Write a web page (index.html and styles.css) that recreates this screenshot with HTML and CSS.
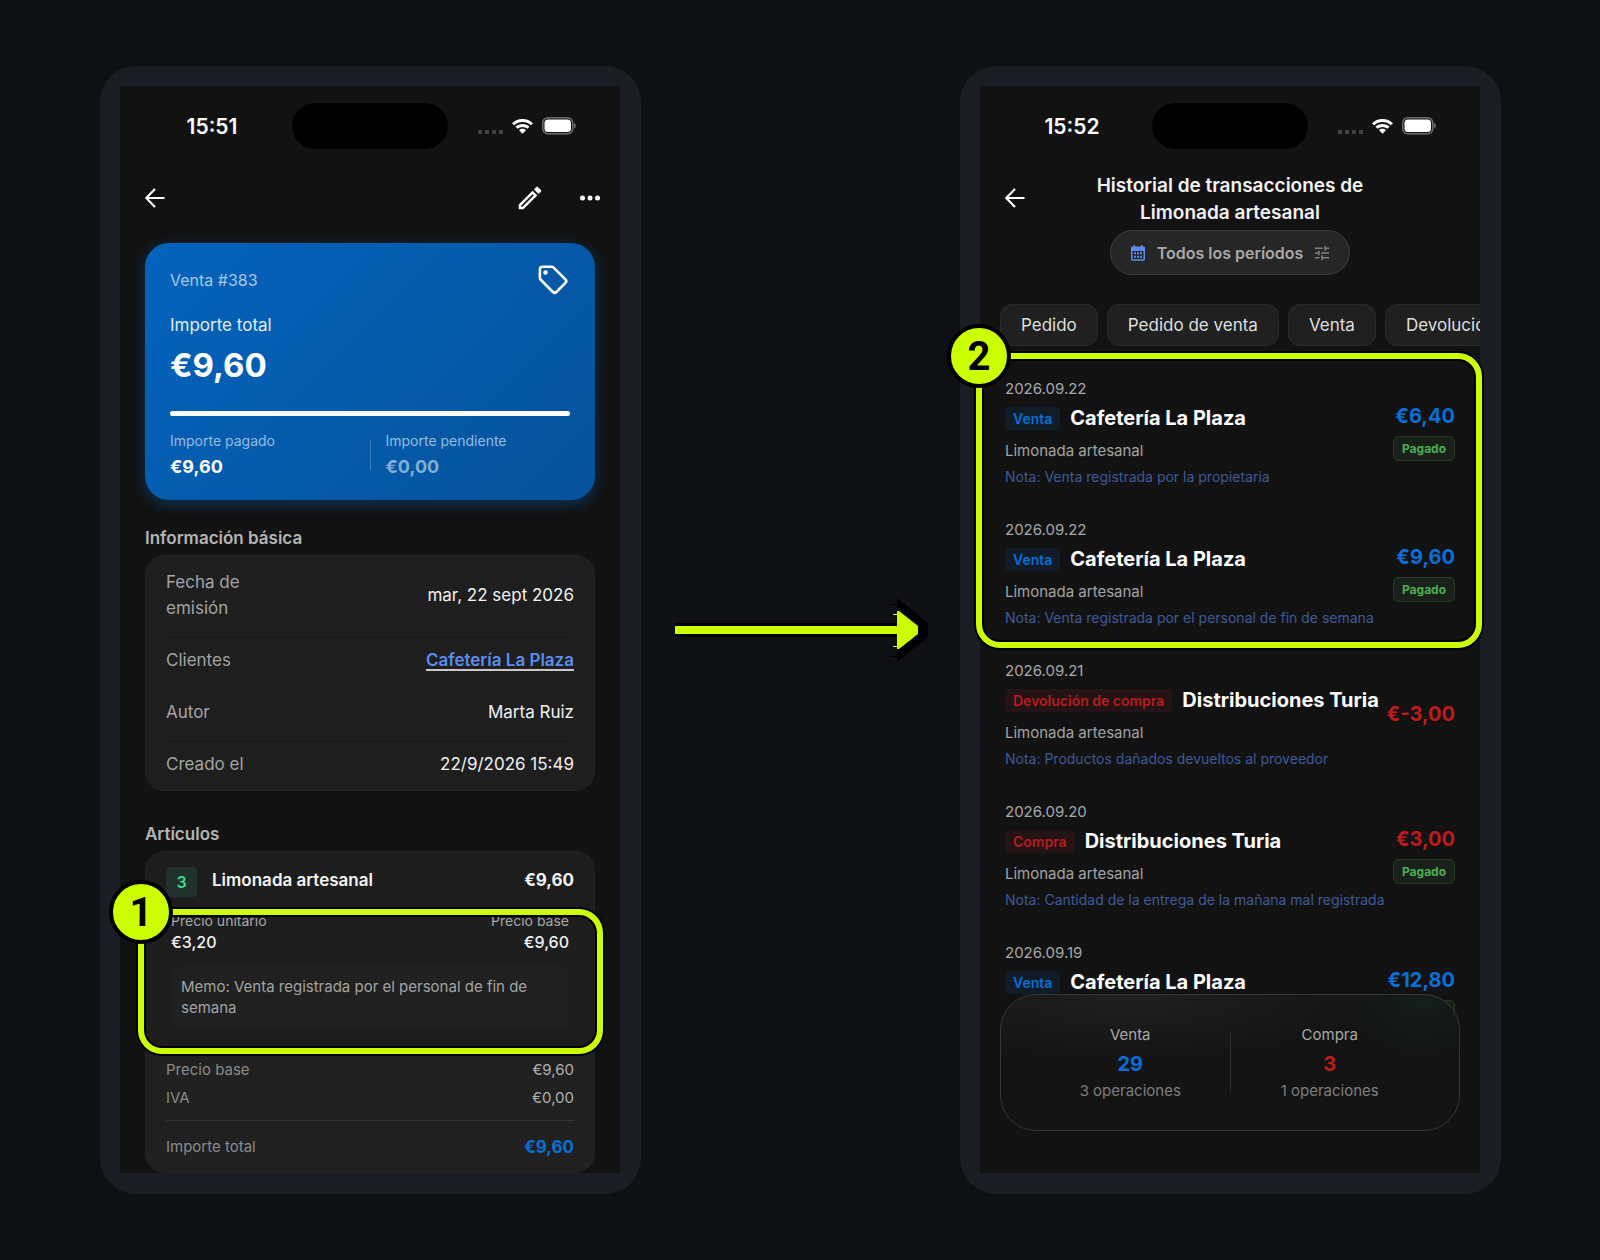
FILE: index.html
```
<!DOCTYPE html>
<html lang="es">
<head>
<meta charset="utf-8">
<meta name="viewport" content="width=device-width, initial-scale=1">
<title>Historial de transacciones</title>
<link rel="stylesheet" href="styles.css">
</head>
<body>
<svg class="defs" aria-hidden="true">
  <symbol id="i-wifi" viewBox="0 0 21 15">
    <path d="M10.500 0C6.400 0 2.700 1.600 0 4.200L2.100 6.300C4.300 4.200 7.300 3 10.500 3S16.700 4.200 18.900 6.300L21 4.200C18.300 1.600 14.600 0 10.500 0Z"/>
    <path d="M10.500 5C7.800 5 5.300 6 3.500 7.700L5.600 9.800C6.900 8.600 8.600 7.900 10.500 7.900S14.100 8.600 15.400 9.800L17.500 7.700C15.700 6 13.200 5 10.500 5Z"/>
    <path d="M10.500 9.800C9.200 9.800 8 10.300 7.100 11.200L10.500 14.800L13.900 11.200C13 10.300 11.800 9.800 10.500 9.800Z"/>
  </symbol>
  <symbol id="i-battery" viewBox="0 0 34 18">
    <rect x="0.750" y="0.750" width="30" height="16" rx="5" fill="none" stroke="#6d6d6d" stroke-width="1.500"/>
    <rect x="2.500" y="2.500" width="26.500" height="12.500" rx="3.500"/>
    <path d="M32 6C33.200 6.500 33.800 7.500 33.800 8.800S33.200 11.100 32 11.600Z" fill="#6d6d6d"/>
  </symbol>
  <symbol id="i-back" viewBox="0 0 20 20">
    <path d="M19.500 10H1.500M10 1L1.200 10L10 19" fill="none" stroke="currentColor" stroke-width="2.200"/>
  </symbol>
</svg>
<main class="stage">

  <section class="phone">
    <div class="screen">
      <div class="status">
        <span class="status-time">15:51</span>
        <span class="island"></span>
        <span class="status-icons">
          <span class="signal"><i></i><i></i><i></i><i></i></span>
          <svg class="wifi"><use href="#i-wifi"/></svg>
          <svg class="battery"><use href="#i-battery"/></svg>
        </span>
      </div>
      <header class="appbar">
        <button class="icon-btn" aria-label="Volver"><svg class="back"><use href="#i-back"/></svg></button>
        <div class="appbar-actions">
          <button class="icon-btn" aria-label="Editar"><svg class="edit" viewBox="0 0 24 24"><path d="M14.060 9.020l.920.920L5.920 19H5v-.920l9.060-9.060M17.660 3c-.250 0-.510.100-.700.290l-1.830 1.830 3.750 3.750 1.830-1.830c.390-.390.390-1.020 0-1.410l-2.340-2.340c-.200-.200-.450-.290-.710-.290zm-3.600 3.190L3 17.250V21h3.750L17.810 9.940l-3.750-3.750z"/></svg></button>
          <button class="icon-btn" aria-label="Más opciones"><svg class="more" viewBox="0 0 20 6"><circle cx="2.500" cy="3" r="2.500"/><circle cx="10" cy="3" r="2.500"/><circle cx="17.500" cy="3" r="2.500"/></svg></button>
        </div>
      </header>

      <div class="content">
        <article class="sale">
          <div class="sale-head">
            <span>Venta #383</span>
            <svg class="tag" viewBox="0 0 30 30"><path d="M4.500 1.700H13.500C14.300 1.700 14.900 1.900 15.400 2.400L27.400 14.400C28.500 15.500 28.500 16.800 27.400 17.900L18.400 27C17.300 28.100 16 28.100 14.900 27L2.700 14.800C2.100 14.300 1.900 13.700 1.900 12.900V4.300C1.900 2.700 2.900 1.700 4.500 1.700Z" fill="none" stroke="currentColor" stroke-width="2.600"/><circle cx="7.500" cy="7.500" r="2.200"/></svg>
          </div>
          <div class="sale-label">Importe total</div>
          <div class="sale-amount">€9,60</div>
          <div class="sale-progress"></div>
          <div class="sale-split">
            <div><div class="split-label">Importe pagado</div><div class="split-value">€9,60</div></div>
            <div class="split-line"></div>
            <div class="pending"><div class="split-label">Importe pendiente</div><div class="split-value">€0,00</div></div>
          </div>
        </article>

        <h2 class="heading">Información básica</h2>
        <dl class="info">
          <div class="info-row"><dt>Fecha de emisión</dt><dd>mar, 22 sept 2026</dd></div>
          <div class="info-row"><dt>Clientes</dt><dd><a href="#cliente">Cafetería La Plaza</a></dd></div>
          <div class="info-row"><dt>Autor</dt><dd>Marta Ruiz</dd></div>
          <div class="info-row"><dt>Creado el</dt><dd>22/9/2026 15:49</dd></div>
        </dl>

        <h2 class="heading">Artículos</h2>
        <div class="items">
          <div class="item-box">
            <div class="item-head">
              <span class="qty">3</span>
              <span class="item-name">Limonada artesanal</span>
              <span class="item-price">€9,60</span>
            </div>
            <div class="item-detail">
              <div class="price-line price-labels"><span>Precio unitario</span><span>Precio base</span></div>
              <div class="price-line price-values"><span>€3,20</span><span>€9,60</span></div>
              <p class="memo">Memo: Venta registrada por el personal de fin de semana</p>
            </div>
          </div>
          <div class="totals">
            <div class="total-row"><span>Precio base</span><span class="total-value">€9,60</span></div>
            <div class="total-row"><span>IVA</span><span class="total-value">€0,00</span></div>
            <div class="total-row grand"><span>Importe total</span><span class="grand-value">€9,60</span></div>
          </div>
        </div>
      </div>
    </div>
    <div class="mark mark-memo"><span class="mark-num">1</span></div>
  </section>

  <svg class="arrow" viewBox="0 0 256 66" aria-hidden="true">
    <path d="M0 25H222V0L253 25V39L222 64V39H0Z" fill="#000"/>
    <path d="M215 6h7v1h-7zM215 58h7v1h-7z" fill="#000"/>
    <path d="M0 28H222V13H224L243 28V36L224 51H222V36H0Z" fill="#cf0"/>
    <path d="M218 16h4v1h-4zM218 48h4v1h-4z" fill="#cf0"/>
  </svg>

  <section class="phone">
    <div class="screen">
      <div class="status">
        <span class="status-time">15:52</span>
        <span class="island"></span>
        <span class="status-icons">
          <span class="signal"><i></i><i></i><i></i><i></i></span>
          <svg class="wifi"><use href="#i-wifi"/></svg>
          <svg class="battery"><use href="#i-battery"/></svg>
        </span>
      </div>
      <header class="history-bar">
        <button class="icon-btn" aria-label="Volver"><svg class="back"><use href="#i-back"/></svg></button>
        <div class="history-title">
          <h1>Historial de transacciones de Limonada artesanal</h1>
          <button class="period">
            <svg class="calendar" viewBox="0 0 14 16"><path fill-rule="evenodd" d="M2.500 0H4V1.500H10V0H11.500V1.500H12.400C13.300 1.500 14 2.200 14 3.100V14C14 15 13.300 15.700 12.400 15.700H1.600C.7 15.700 0 15 0 14V3.100C0 2.200.7 1.500 1.600 1.500H2.500ZM1.500 6V14.200H12.500V6Z"/><path d="M3 7.200h2v2H3zM6 7.200h2v2H6zM9 7.200h2v2H9zM3 10.700h2v2H3zM6 10.700h2v2H6zM9 10.700h2v2H9z"/></svg>
            <span>Todos los períodos</span>
            <svg class="tune" viewBox="3 3 18 18"><path d="M3 17v2h6v-2H3zM3 5v2h10V5H3zm10 16v-2h8v-2h-8v-2h-2v6h2zM7 9v2H3v2h4v2h2V9H7zm14 4v-2H11v2h10zm-6-4h2V7h4V5h-4V3h-2v6z"/></svg>
          </button>
        </div>
      </header>

      <nav class="chips">
        <button>Pedido</button><button>Pedido de venta</button><button>Venta</button><button>Devolución</button>
      </nav>

      <ul class="history">
        <li class="entry">
          <div>
            <div class="entry-date">2026.09.22</div>
            <div class="entry-main"><span class="kind">Venta</span><strong>Cafetería La Plaza</strong></div>
            <div class="entry-item">Limonada artesanal</div>
            <div class="entry-note">Nota: Venta registrada por la propietaria</div>
          </div>
          <div class="entry-side"><span class="amount">€6,40</span><span class="paid">Pagado</span></div>
        </li>
        <li class="entry">
          <div>
            <div class="entry-date">2026.09.22</div>
            <div class="entry-main"><span class="kind">Venta</span><strong>Cafetería La Plaza</strong></div>
            <div class="entry-item">Limonada artesanal</div>
            <div class="entry-note">Nota: Venta registrada por el personal de fin de semana</div>
          </div>
          <div class="entry-side"><span class="amount">€9,60</span><span class="paid">Pagado</span></div>
        </li>
        <li class="entry purchase">
          <div>
            <div class="entry-date">2026.09.21</div>
            <div class="entry-main"><span class="kind">Devolución de compra</span><strong>Distribuciones Turia</strong></div>
            <div class="entry-item">Limonada artesanal</div>
            <div class="entry-note">Nota: Productos dañados devueltos al proveedor</div>
          </div>
          <div class="entry-side"><span class="amount">€-3,00</span></div>
        </li>
        <li class="entry purchase">
          <div>
            <div class="entry-date">2026.09.20</div>
            <div class="entry-main"><span class="kind">Compra</span><strong>Distribuciones Turia</strong></div>
            <div class="entry-item">Limonada artesanal</div>
            <div class="entry-note">Nota: Cantidad de la entrega de la mañana mal registrada</div>
          </div>
          <div class="entry-side"><span class="amount">€3,00</span><span class="paid">Pagado</span></div>
        </li>
        <li class="entry">
          <div>
            <div class="entry-date">2026.09.19</div>
            <div class="entry-main"><span class="kind">Venta</span><strong>Cafetería La Plaza</strong></div>
          </div>
          <div class="entry-side"><span class="amount">€12,80</span><span class="paid"></span></div>
        </li>
      </ul>

      <footer class="summary">
        <div class="sum-col"><span>Venta</span><strong class="sum-sale">29</strong><small>3 operaciones</small></div>
        <div class="sum-line"></div>
        <div class="sum-col"><span>Compra</span><strong class="sum-buy">3</strong><small>1 operaciones</small></div>
      </footer>
    </div>
    <div class="mark mark-sales"><span class="mark-num">2</span></div>
  </section>

</main>
</body>
</html>
```
FILE: styles.css
```
* { box-sizing: border-box; }

body {
  margin: 0;
  background: #0f1014;
  color: #f2f2f2;
  font-family: Inter, "Liberation Sans", sans-serif;
}

button {
  font: inherit;
  color: inherit;
  border: 0;
  background: none;
  padding: 0;
}

svg { display: block; fill: currentColor; }
h1, h2, p, dl, dd, ul { margin: 0; padding: 0; }
.defs { position: absolute; width: 0; height: 0; }

.stage {
  display: grid;
  grid-template-columns: minmax(0, 541fr) minmax(0, 319fr) minmax(0, 541fr);
  min-height: 100vh;
  padding: 66px 99px 66px 100px;
}

.phone {
  position: relative;
  display: flex;
  padding: 20px 21px 21px 20px;
  border-radius: 36px;
  background: #1b1d25;
}

.screen {
  position: relative;
  flex: 1;
  min-width: 0;
  overflow: hidden;
  background: #121212;
}

/* Status bar */
.status {
  display: grid;
  grid-template-columns: 1fr 156px 1fr;
  align-items: center;
  height: 80px;
}
.status-time {
  padding-left: 12px;
  text-align: center;
  font-size: 21px;
  font-weight: 600;
  color: #fff;
}
.island { height: 46px; border-radius: 23px; background: #000; }
.status-icons {
  display: flex;
  align-items: center;
  justify-content: flex-end;
  gap: 9px;
  padding-right: 44px;
  color: #fff;
}
.signal { display: flex; gap: 3px; padding-top: 12px; }
.signal i { width: 4px; height: 4px; border-radius: 1px; background: #444; }
.wifi { width: 21px; height: 15px; }
.battery { width: 34px; height: 18px; }

/* App bars */
.appbar {
  display: flex;
  align-items: center;
  justify-content: space-between;
  height: 64px;
  padding: 0 20px 0 25px;
}
.appbar-actions { display: flex; align-items: center; gap: 35px; }
.icon-btn { color: #fff; }
.back { width: 20px; height: 20px; }
.edit { width: 30px; height: 30px; }
.more { width: 20px; height: 6px; }

.content { padding: 13px 25px 0; }

/* Sale card */
.sale {
  padding: 22px 25px 21px;
  margin-bottom: 26px;
  border-radius: 24px;
  background: linear-gradient(135deg, #0463bd, #05529a);
  box-shadow: 0 4px 14px rgba(4, 99, 189, 0.4);
}
.sale-head {
  display: flex;
  align-items: center;
  justify-content: space-between;
  height: 30px;
  padding-right: 2px;
  font-size: 16px;
  color: #a6c8e8;
}
.tag { width: 30px; height: 30px; color: #fff; }
.sale-label { margin-top: 17px; font-size: 17px; line-height: 26px; color: #e3eef8; }
.sale-amount { margin-top: 6px; font-size: 33px; font-weight: 700; line-height: 42px; color: #fff; }
.sale-progress { height: 5px; margin: 25px 0 15px; border-radius: 3px; background: #fff; }
.sale-split { display: grid; grid-template-columns: 1fr 1px 1fr; align-items: center; }
.split-label { margin-bottom: 4px; font-size: 14px; line-height: 20px; color: #93bbe0; }
.split-value { font-size: 18px; font-weight: 700; line-height: 24px; color: #fff; }
.split-line { height: 30px; background: #3b81c2; }
.pending { padding-left: 15px; }
.pending .split-value { color: #82aed6; }

.heading { margin-bottom: 5px; font-size: 17px; font-weight: 600; line-height: 24px; color: #b4b4b4; }

/* Basic information */
.info {
  margin-bottom: 31px;
  padding: 0 20px;
  border: 1px solid #232323;
  border-radius: 20px;
  background: #1e1e1e;
  font-size: 17px;
  line-height: 26px;
}
.info-row {
  display: flex;
  align-items: center;
  justify-content: space-between;
  padding: 12px 0 13px;
  border-bottom: 1px solid #232323;
}
.info-row:first-child { padding-top: 13px; }
.info-row:last-child { border-bottom: 0; }
.info dt { max-width: 120px; color: #a3a3a3; }
.info a {
  font-weight: 600;
  color: #5b8def;
  text-decoration: underline 2px #c8c8c8;
  text-underline-offset: 3px;
}

/* Items */
.items {
  overflow: hidden;
  border: 1px solid #232323;
  border-radius: 20px;
  background: #202020;
}
.item-box { padding: 15px 0 20px; background: #1d1d1d; }
.item-head {
  display: flex;
  padding: 0 20px;
  font-size: 17px;
  font-weight: 600;
  line-height: 26px;
  color: #f5f5f5;
}
.qty {
  width: 31px;
  height: 30px;
  border-radius: 4px;
  background: #20302a;
  text-align: center;
  font-size: 16px;
  line-height: 30px;
  color: #3ddc84;
}
.item-name { flex: 1; padding-left: 15px; }
.item-price { font-weight: 700; }
.item-detail { padding: 15px 25px 0; }
.price-line { display: flex; justify-content: space-between; }
.price-labels { font-size: 14px; line-height: 18px; color: #a8a8a8; }
.price-values { margin-bottom: 12px; font-size: 16px; font-weight: 500; line-height: 24px; }
.memo {
  padding: 10px;
  border-radius: 10px;
  background: #202020;
  font-size: 15px;
  line-height: 21px;
  color: #a3a3a3;
}
.totals { padding: 8px 20px 11px; font-size: 15px; line-height: 28px; color: #8a8a8a; }
.total-row { display: flex; justify-content: space-between; }
.total-value { color: #b0b0b0; }
.grand { margin-top: 8px; padding-top: 12px; border-top: 1px solid #353535; }
.grand-value { font-size: 17px; font-weight: 700; color: #0570d8; }

/* History */
.history-bar {
  display: grid;
  grid-template-columns: 20px minmax(0, 1fr) 20px;
  padding: 6px 25px 0;
}
.history-bar .icon-btn { height: 52px; }
.history-title { display: flex; flex-direction: column; align-items: center; gap: 4px; }
.history-title h1 {
  max-width: 320px;
  text-align: center;
  font-size: 19px;
  font-weight: 600;
  line-height: 27px;
}
.period {
  display: flex;
  align-items: center;
  gap: 12px;
  height: 45px;
  padding: 0 20px;
  border: 1px solid #3c3c3c;
  border-radius: 23px;
  background: #262626;
  font-size: 16px;
  font-weight: 600;
  color: #a8a8a8;
}
.calendar { width: 14px; height: 16px; color: #5b8def; }
.tune { width: 14px; height: 14px; color: #828282; }

.chips { display: flex; gap: 9px; overflow: hidden; padding: 29px 0 0 20px; }
.chips button {
  flex: none;
  height: 42px;
  padding: 0 20px;
  border: 1px solid #2a2a2a;
  border-radius: 12px;
  background: #202020;
  font-size: 17px;
  color: #dedede;
}

.history { padding: 31px 25px 0; list-style: none; }
.entry {
  display: grid;
  grid-template-columns: minmax(0, 1fr) auto;
  align-items: center;
  min-height: 110px;
  margin-bottom: 31px;
  white-space: nowrap;
}
.entry > div:first-child { align-self: start; }
.entry-date { font-size: 15px; line-height: 24px; color: #a8a8a8; }
.entry-main { display: flex; align-items: center; gap: 10px; height: 34px; }
.entry-main strong { font-size: 20px; font-weight: 700; color: #fff; }
.kind {
  padding: 0 8px;
  border-radius: 4px;
  background: #101c28;
  font-size: 14px;
  font-weight: 600;
  line-height: 23px;
  color: #0570d8;
}
.entry-item { font-size: 15px; line-height: 32px; color: #a3a3a3; }
.entry-note { font-size: 14px; line-height: 20px; color: #3d5a96; }
.entry-side { display: flex; flex-direction: column; align-items: flex-end; gap: 6px; }
.amount { font-size: 20px; font-weight: 700; line-height: 27px; color: #0570d8; }
.paid {
  min-width: 62px;
  height: 25px;
  border: 1px solid #1f3a20;
  border-radius: 5px;
  background: #182019;
  text-align: center;
  font-size: 12px;
  font-weight: 700;
  line-height: 23px;
  color: #4caf50;
}
.purchase .kind { background: #241314; color: #b71c1c; }
.purchase .amount { color: #c01a1a; }

.summary {
  position: absolute;
  inset: auto 20px 42px;
  display: grid;
  grid-template-columns: 1fr 1px 1fr;
  align-items: center;
  padding: 26px 30px 27px;
  border: 1px solid #363636;
  border-radius: 36px;
  background:
    radial-gradient(260px 70px at 28% 0, #1f1f1f, transparent),
    radial-gradient(80px 60px at 92% 5%, #151d1b, transparent),
    #131313;
}
.sum-col { display: flex; flex-direction: column; align-items: center; font-size: 15px; line-height: 28px; color: #a8a8a8; }
.sum-col strong { font-size: 20px; font-weight: 700; line-height: 30px; }
.sum-col small { font-size: 15px; line-height: 24px; color: #7d7d7d; }
.sum-sale { color: #0570d8; }
.sum-buy { color: #c01a1a; }
.sum-line { height: 60px; background: #2c2c2c; }

/* Numbered callouts drawn over the phones */
.mark {
  position: absolute;
  border: 6px solid #cf0;
  border-radius: 24px;
  box-shadow: 0 0 0 2px #000, inset 0 0 0 2px #000;
}
.mark-memo { inset: 843px 38px 140px; }
.mark-sales { inset: 287px 19px 546px 16px; }
.mark-num {
  position: absolute;
  top: -35px;
  left: -35px;
  width: 64px;
  height: 64px;
  border: 4px solid #000;
  border-radius: 50%;
  background: #cf0;
  text-align: center;
  font-family: Roboto, "Liberation Sans", sans-serif;
  font-size: 40px;
  font-weight: 700;
  line-height: 58px;
  color: #000;
}

.arrow { width: 256px; max-width: 100%; height: 66px; margin: 532px auto 0 34px; }
```
